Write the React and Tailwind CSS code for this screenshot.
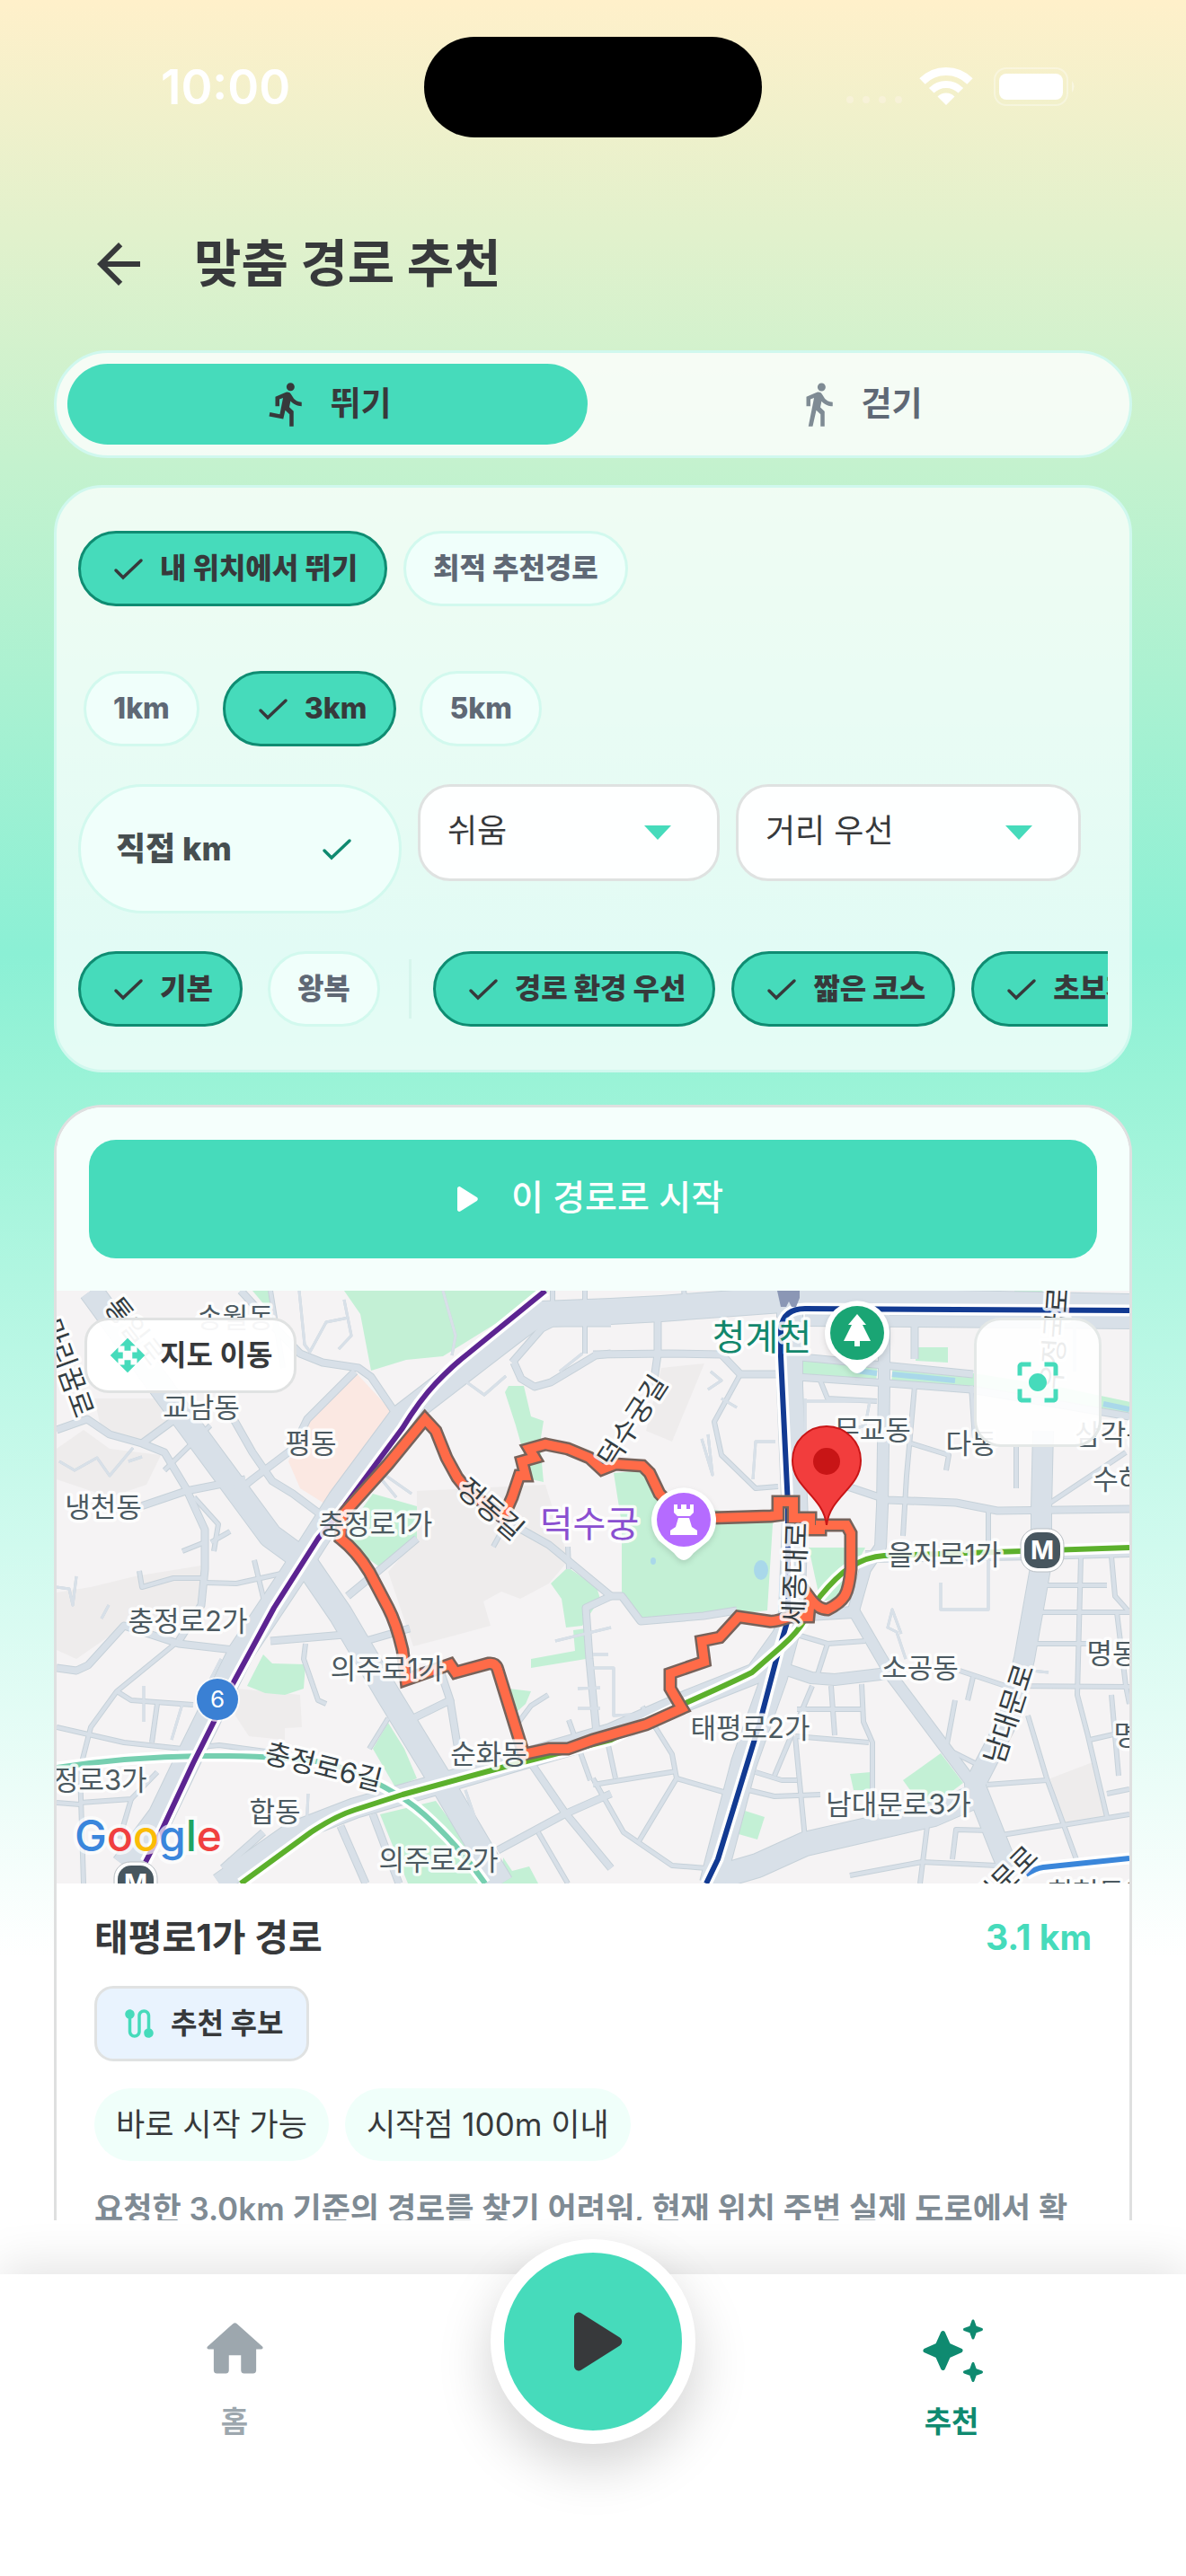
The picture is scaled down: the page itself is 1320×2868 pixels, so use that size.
import React, { useState } from 'react';
import { MdArrowBack, MdCenterFocusStrong, MdDirectionsRun, MdDirectionsWalk, MdOpenWith, MdRoute } from 'react-icons/md';

const parks = ['320,0 338,26 350,89 389,77 430,73 548,0', '218,0 240,0 243,30', '503,106 520,106 528,140 542,145 538,170 542,213 528,210 511,150 499,113', '352,226 401,240 401,276 360,308 316,276', '569,308 601,330 605,343 585,373 567,375 562,343 550,326', '575,378 589,376 589,410 528,420 528,410 577,401', '503,443 528,446 522,460 511,470', '230,405 240,415 277,416 275,443 254,450 232,448 212,440', '369,481 387,510 401,543 377,553 352,510', '360,583 422,568 462,623 483,660 391,660', '497,631 507,646 526,641 536,660 495,660', '620,203 652,200 673,233 799,256 797,260 791,356 757,360 654,368 629,336 629,260', '837,286 900,286 871,343 850,346', '957,63 992,63 992,80 956,78', '778,0 801,0 801,6 778,6', '1066,0 1098,0 1086,10 1068,10', '984,515 1009,548 976,573 955,563 942,545', '883,538 906,536 906,556 887,556', '763,578 788,586 780,611 759,605', '597,330 604,342 597,346'];
const blocks = ['0,176 30,155 59,176 116,183 100,216 59,230 0,210', '42,120 120,120 136,140 99,166 50,156', '401,223 544,216 570,300 548,326 516,343 495,335 475,346 483,373 397,396 369,313 401,276', '0,336 38,330 87,318 161,306 156,353 71,376 22,410 0,400', '201,443 271,450 273,486 254,487 254,500 214,496 199,473', '673,86 721,81 685,168 656,156', '1106,543 1153,525 1169,586 1121,596'];
const roads = [{
  width: 28,
  lines: ['38,0 140,140 238,273 275,300 316,360 369,450 430,550 483,640 495,660', '736,653 780,640 833,616 976,583 1022,563']
}, {
  width: 30,
  lines: ['75,640 116,585 152,510 205,403 263,316 316,233 385,140 446,93 507,46 526,32 540,26 617,23 673,20 807,10 1194,18', '816,20 816,106 822,256 818,360 799,430 765,526 736,636 730,660']
}, {
  width: 24,
  lines: ['181,660 262,603 332,576 430,548 524,520 617,493 702,456 778,426 818,370', '1098,156 1096,243 1096,303 1077,410 1060,476 1022,550 1052,626 1060,645']
}, {
  width: 14,
  lines: ['887,356 930,430 1022,553', '807,420 840,431 866,433 925,426', '887,356 900,310 917,285 919,240 921,106 921,0', '900,296 1094,293 1194,290', '820,362 887,358', '833,33 1194,36']
}, {
  width: 9,
  lines: ['0,155 34,143 59,160 95,170 120,180 144,220 165,266 165,310 161,350 136,390', '95,170 136,140', '205,0 238,36 271,70 296,80 336,86 350,96 377,136 392,143', '332,90 279,143 263,176 218,210 193,230', '183,125 197,143 218,180 240,212 263,226 299,253', '85,243 144,223 210,210', '0,420 22,423 35,417 75,373 136,393 197,400', '238,390 320,383', '324,340 369,303 401,276', '507,260 548,283 617,340 589,353 593,410 601,493', '344,390 393,376', '397,476 438,456 426,420', '438,456 446,506', '524,520 565,580 617,643', '491,623 565,583 617,560', '316,596 344,660', '352,583 381,660', '230,603 185,643', '597,71 681,70 740,71 761,93 803,93', '816,73 850,76 1020,93', '824,96 925,103 1018,110 1194,140', '880,218 925,233 1001,236 1047,245 1194,243', '669,33 669,71 664,106', '617,340 629,340 650,368 720,362 757,356', '955,33 955,76', '509,80 517,98 532,107 550,102 600,72 617,70', '507,80 540,42 552,36 617,36']
}, {
  width: 6,
  lines: ['132,393 67,446 38,486 26,533 30,660', '0,486 75,503 140,510 181,506 240,514', '67,446 83,456 152,461', '112,460 106,503', '277,393 275,410 291,456 300,460', '369,476 348,510', '536,603 569,660', '26,570 83,566 112,536', '83,566 70,610', '597,543 631,603 685,640 723,643', '648,613 690,543 685,516 652,463', '690,543 749,560', '597,550 690,535', '614,506 622,543', '778,536 807,545 824,545', '770,556 799,563 850,561', '862,440 866,495', '896,438 898,480 908,503 908,590', '841,440 799,540', '824,466 898,466', '822,496 904,503', '822,496 833,610', '824,383 858,393 900,390', '858,393 845,433', '1005,423 1056,440 1194,441', '1089,393 1148,393', '1094,358 1194,358', '1102,328 1169,328', '1140,296 1136,450 1148,496 1169,586', '1174,296 1178,340 1194,358', '1180,358 1190,440 1194,460', '1081,473 1102,543 1136,636', '1035,550 1102,545', '1052,606 1194,583', '963,636 1047,640', '883,651 963,636', '969,596 961,660', '997,633 1001,600 1039,601', '761,93 732,146 740,183 778,220 803,218', '955,106 946,206 942,273', '951,170 993,183 990,200', '1018,106 1022,166', '1068,173 1068,220', '1106,236 1190,180', '1037,240 1037,290', '850,100 858,120 913,123', '698,0 700,11', '552,0 552,36', '588,0 588,70', '238,0 252,86', '0,570 26,572', '172,280 193,268', '140,290 165,280', '171,150 120,200', '153,230 180,260 175,290', '92,312 95,330 130,320 161,320', '165,325 200,326 250,315', '220,300 232,350', '1150,500 1194,490', '1169,560 1194,555', '1174,450 1182,540', '1020,430 1014,456', '1000,456 990,510 1030,530', '831,0 831,12', '921,0 921,12', '505,250 486,285', '569,285 570,310', '547,450 528,462 510,486', '594,545 570,478']
}, {
  width: 3,
  lines: ['270,0 276,60 282,68 300,35 325,30', '320,10 328,50 314,65', '430,0 444,50 440,72', '3,190 20,200 45,186 59,206 85,175', '95,185 80,190', '382,135 358,200 395,226', '345,190 378,230', '440,90 476,116 500,95', '560,90 585,70', '1133,35 1133,90', '833,120 833,170 900,150 905,123', '835,123 903,123', '728,90 740,100 725,110', '740,120 757,130', '718,165 730,205 725,160', '800,168 778,168 775,210', '597,420 620,420 620,473 660,471', '597,405 614,405', '984,325 984,355 1037,355 1037,300', '945,410 935,380 925,375 930,355 940,382', '555,390 617,375', '128,500 140,460', '97,440 97,480', '183,410 165,445', '280,560 278,600', '455,556 470,600 460,625', '0,330 14,332 18,350 22,318', '50,365 58,350', '1085,423 1104,425', '580,443 605,442', '580,465 605,465']
}];
const lines = [{
  color: '#76cfb0',
  d: 'M0 531 Q79 519 161 518 T303 526 Q372 550 409 583 T477 660'
}, {
  color: '#5c2491',
  d: 'M544 0 458 70Q440 84 422 103T385 153L316 246 291 276 242 353 197 436 152 526 116 603 99 636'
}, {
  color: '#123a92',
  d: 'M1194 22 833 20Q809 20 806 42L806 73 814 240V366L803 403 782 483 736 633 723 660'
}, {
  color: '#5cb02c',
  d: 'M205 660 283 603Q310 585 332 578L385 561 499 530 617 500 698 460Q752 436 774 425L807 396Q825 380 833 366Q842 350 850 340Q868 318 883 308Q902 296 921 295L1194 286'
}, {
  color: '#3a86da',
  d: 'M1079 650Q1090 643 1098 642L1194 632'
}];
const routePath = 'M318 250 369 193 410 143 422 156 434 186 446 208 458 223 497 253 507 230 515 206 522 206 518 190 532 186 526 176 544 171 569 176 593 186 607 199 622 193 652 195 660 203 671 226 698 254 795 251 803 250 803 235 820 235 820 253 839 253 839 266 850 266 850 261 879 261 884 270 884 310Q882 332 877 340T858 355Q848 355 839 343L837 363 816 363Q800 369 793 368L759 363 738 386 718 390 721 413 683 426 683 443 696 465 656 483 597 500 569 510 548 510 520 516 491 422Q489 414 481 415L444 425 438 416 389 433 385 400Q378 370 369 353T348 313Q334 290 316 276Z';
const places = [['송월동', 199, 30], ['교남동', 161, 130], ['평동', 283, 170], ['냉천동', 52, 241], ['충정로1가', 355, 260], ['충정로2가', 146, 368], ['의주로1가', 368, 421], ['순화동', 481, 516], ['합동', 243, 580], ['의주로2가', 425, 634], ['충정로3가', 34, 545], ['을지로1가', 988, 294], ['소공동', 961, 420], ['태평로2가', 772, 487], ['남대문로3가', 937, 572], ['명동', 1175, 404], ['명동', 1205, 495], ['무교동', 908, 155], ['다동', 1018, 170], ['삼각동', 1176, 160], ['수하동', 1196, 210], ['회현동1가', 1166, 670]];
const streets = [['통일로', 87, 45, 52], ['마리꿈로', 12, 86, 70], ['정동길', 483, 243, 41], ['덕수궁길', 641, 145, -57], ['세종대로', 822, 315, -88], ['남대문로', 1060, 471, -72], ['남대문로', 1046, 664, -45], ['충정로6길', 297, 530, 14], ['우정국로', 1111, 53, -86]];

const PlayIcon = ({
  className
}) => <svg viewBox="0 0 24 24" fill="currentColor" aria-hidden="true" className={className}>
    <path d="M8 6.82v10.36c0 .79.87 1.27 1.54.84l8.14-5.18c.62-.39.62-1.29 0-1.69L9.54 5.98C8.87 5.55 8 6.03 8 6.82z" />
  </svg>;

const CheckIcon = ({
  className
}) => <svg viewBox="0 0 36 36" fill="none" stroke="currentColor" strokeWidth="3.5" strokeLinecap="round" aria-hidden="true" className={className}>
    <path d="M3 20 11 28 31 9" />
  </svg>;

const HomeIcon = ({
  className
}) => <svg viewBox="0 0 24 24" fill="currentColor" aria-hidden="true" className={className}>
    <path d="M10 19v-5h4v5c0 .55.45 1 1 1h3c.55 0 1-.45 1-1v-7h1.7c.46 0 .68-.57.33-.87L12.67 3.6c-.38-.34-.96-.34-1.34 0l-8.36 7.53c-.34.3-.13.87.33.87H5v7c0 .55.45 1 1 1h3c.55 0 1-.45 1-1z" />
  </svg>;

const SparkleIcon = ({
  className
}) => <svg viewBox="0 0 81 81" fill="currentColor" stroke="currentColor" strokeWidth="5" strokeLinejoin="round" aria-hidden="true" className={className}>
    <path d="M30.5 22.5 36.5 36 50 42 36.5 48 30.5 61.5 24.5 48 11 42 24.5 36z" />
    <path strokeWidth="3" d="M64 9 66.5 16 73.5 18.5 66.5 21 64 28 61.5 21 54.5 18.5 61.5 16zM64 56.5 66.5 63.5 73.5 66 66.5 68.5 64 75.5 61.5 68.5 54.5 66 61.5 63.5z" />
  </svg>;

const StatusBar = () => <div className="grid shrink-0 grid-cols-[1fr_376px_1fr] items-center pt-[41px]">
    <div className="pl-[179px] text-[53px] leading-[64px] font-semibold text-white">10:00</div>
    <div className="h-28 rounded-full bg-black" />
    <div className="flex justify-end pr-[123px]">
      <svg viewBox="0 0 256 60" fill="none" stroke="#fff" className="h-[60px] w-64" aria-hidden="true">
        {[5, 23, 41, 59].map(x => <circle key={x} cx={x} cy="44" r="4" fill="#fff4ea" fillOpacity=".4" stroke="none" />)}
        <path d="M85.5 23.5A37.5 37.5 0 0 1 138.5 23.5" strokeWidth="9" />
        <path d="M95.7 33.7A23 23 0 0 1 128.3 33.7" strokeWidth="8" />
        <path d="M112 50 102.5 40.5A13.5 13.5 0 0 1 121.5 40.5z" fill="#fff" stroke="none" />
        <rect x="166" y="9" width="81" height="41" rx="13" strokeOpacity=".35" strokeWidth="2" />
        <rect x="171" y="15" width="71" height="29" rx="8" fill="#fff" stroke="none" />
        <path d="M252 23Q257 29 252 36z" fill="#fff" fillOpacity=".4" stroke="none" />
      </svg>
    </div>
  </div>;

const Chip = ({
  label,
  selected,
  onClick
}) => <button type="button" aria-pressed={selected} onClick={onClick} className={`flex h-[84px] shrink-0 items-center rounded-full border-3 text-[32px] leading-10 font-extrabold whitespace-nowrap ${selected ? 'gap-4 border-[#0f8c72] bg-[#46dbbb] pr-[30px] pl-9 text-[#37393b]' : 'border-[#d2f9ee] bg-[#f0fffb] px-[30px] text-[#5f6875]'}`}>
    {selected && <CheckIcon className="h-9 w-9" />}
    {label}
  </button>;

const SelectBox = ({
  label,
  options,
  className
}) => <div className={`relative h-[108px] ${className}`}>
    <select aria-label={label} className="h-full w-full appearance-none rounded-[36px] border-3 border-[#dfe2e1] bg-white/95 pr-20 pb-1 pl-[30px] text-4xl text-[#37393b]">
      {options.map(option => <option key={option}>{option}</option>)}
    </select>
    <svg viewBox="0 0 30 16" className="pointer-events-none absolute top-[46px] right-[54px] h-4 w-[30px]" aria-hidden="true">
      <path d="M0 0h30L15 16z" fill="#46dbbb" />
    </svg>
  </div>;

const RouteMap = () => <svg viewBox="0 0 1194 660" preserveAspectRatio="xMidYMid slice" role="img" aria-label="경로 지도" className="h-[660px] w-full">
    <rect width="1194" height="660" fill="#f5f3f4" />
    {blocks.map(points => <polygon key={points} points={points} fill="#eeecec" />)}
    <polygon points="332,90 369,130 381,143 316,236 303,240 271,220 265,206 258,190 283,143" fill="#fbe8e2" />
    {parks.map(points => <polygon key={points} points={points} fill="#c3f0d5" />)}
    <path d="M828 84 913 91M930 92 1020 100 1110 114 1194 132" stroke="#c3f0d5" strokeWidth="16" fill="none" />
    <path d="M890 89 913 92M930 93 1000 100M1165 126 1194 132" stroke="#a9d8ea" strokeWidth="6" fill="none" />
    <ellipse cx="784" cy="311" rx="8" ry="11" fill="#a9d8ea" />
    <ellipse cx="664" cy="301" rx="3" ry="4" fill="#a9d8ea" />
    <g fill="none" strokeLinejoin="round">
      {roads.map(group => <g key={group.width} stroke="#c6d1d9" strokeWidth={group.width}>
          {group.lines.map(points => <polyline key={points} points={points} />)}
        </g>)}
      {roads.map(group => <g key={group.width} stroke="#d8e0e8" strokeWidth={group.width > 3 ? group.width - 2 : 3}>
          {group.lines.map(points => <polyline key={points} points={points} />)}
        </g>)}
      {lines.map(line => <g key={line.color}>
          <path d={line.d} stroke="#fff" strokeWidth="13" />
          <path d={line.d} stroke={line.color} strokeWidth="6" />
        </g>)}
      <path d={routePath} stroke="#77625a" strokeWidth="15" strokeLinejoin="miter" />
      <path d={routePath} stroke="#ff6b48" strokeWidth="10" strokeLinejoin="miter" />
    </g>
    <path d="M802 0h25v8l-4 10h-5l-3-6-3 6h-6z" fill="#8b97b5" />
    <circle cx="179" cy="455" r="25" fill="#fff" fillOpacity=".7" />
    <circle cx="179" cy="455" r="23" fill="#3a80d4" />
    <text x="179" y="464" textAnchor="middle" fontSize="26" fill="#fff">6</text>
    <g textAnchor="middle" paintOrder="stroke" stroke="#fff" strokeOpacity=".85" strokeWidth="7" strokeLinejoin="round">
      {places.map(([name, x, y]) => <text key={`${name}${x}`} x={x} y={y + 11} fontSize="31" fill="#4b5960">{name}</text>)}
      {streets.map(([name, x, y, angle]) => <text key={`${name}${x}`} transform={`translate(${x} ${y}) rotate(${angle})`} y="11" fontSize="31" fill="#343d42">{name}</text>)}
      <text x="785" y="66" fontSize="40" fill="#12876c">청계천</text>
      <text x="593" y="274" fontSize="40" fill="#8a4fd0">덕수궁</text>
    </g>
    {[[1097, 289], [88, 660]].map(([x, y]) => <g key={x}>
        <rect x={x - 24} y={y - 24} width="48" height="48" rx="18" fill="#fff" stroke="#b9bfc4" strokeWidth="1" />
        <rect x={x - 20} y={y - 20} width="40" height="40" rx="15" fill="#47565f" />
        <text x={x} y={y + 10} textAnchor="middle" fontSize="28" fontWeight="700" fill="#fff">M</text>
      </g>)}
    <g className="drop-shadow-md">
      <path d="M891 92Q886 92 880 84L863 70A36 36 0 1 1 919 70L902 84Q896 92 891 92z" fill="#fff" />
      <circle cx="891" cy="47" r="30" fill="#1aa574" />
      <path d="M891 26 901 38H897L906 56H894V62H888V56H876L885 38H881z" fill="#fff" />
    </g>
    <g className="drop-shadow-md">
      <path d="M698 300Q693 300 687 292L670 278A36 36 0 1 1 726 278L709 292Q703 300 698 300z" fill="#fff" />
      <circle cx="698" cy="255" r="30" fill="#b56bff" />
      <path d="M687 238h4v5h4v-5h6v5h4v-5h4v9l-4 4h-14l-4-4zM692 253h12l3 10 6 4v5h-30v-5l6-4z" fill="#fff" />
    </g>
    <path d="M857 261C853 228 819 220 819 189A38 38 0 0 1 895 189C895 220 861 228 857 261z" fill="#f23d3d" stroke="#c81516" strokeWidth="2" />
    <circle cx="857" cy="190" r="15" fill="#c81516" />
    <text x="20" y="624" fontSize="48" fontWeight="500" paintOrder="stroke" stroke="#fff" strokeOpacity=".7" strokeWidth="8">
      <tspan fill="#3a86dc">G</tspan>
      <tspan fill="#f04040">o</tspan>
      <tspan fill="#fbbc05">o</tspan>
      <tspan fill="#3a86dc">g</tspan>
      <tspan fill="#1fa463">l</tspan>
      <tspan fill="#f04040">e</tspan>
    </text>
  </svg>;

const RouteCard = () => <article className="mx-[60px] mt-9 flex min-h-0 flex-1 flex-col overflow-hidden rounded-t-[54px] border-3 border-b-0 border-[#dfe0e0] bg-white">
    <div className="bg-[#f5fffc] p-9">
      <button type="button" className="flex h-[132px] w-full items-center justify-center gap-6 rounded-[30px] bg-[#46dbbb] pr-6 text-[39px] font-medium text-white">
        <PlayIcon className="h-[54px] w-[54px]" />
        <span className="pb-1">이 경로로 시작</span>
      </button>
    </div>
    <div className="relative shrink-0">
      <RouteMap />
      <button type="button" className="absolute top-[30px] left-[31px] flex h-[84px] items-center gap-[15px] rounded-[27px] border-3 border-[#e0e2e2] bg-white/95 px-6 text-[32px] font-bold text-[#37393b]">
        <MdOpenWith className="h-[42px] w-[42px] text-[#46dbbb]" />
        지도 이동
      </button>
      <button type="button" aria-label="현재 위치" className="absolute top-[30px] right-[31px] flex h-36 w-[142px] items-center justify-center rounded-[30px] border-3 border-[#e4e8e7] bg-white/90">
        <MdCenterFocusStrong className="h-[60px] w-[60px] text-[#46dbbb]" />
      </button>
    </div>
    <div className="px-[42px] pt-9">
      <div className="flex items-center justify-between leading-[48px] font-bold">
        <h2 className="text-[41px] text-[#37393b]">태평로1가 경로</h2>
        <span className="text-[39px] text-[#46dbbb]">3.1 km</span>
      </div>
      <div className="mt-[30px] flex h-[84px] w-fit items-center gap-[14px] rounded-[21px] border-3 border-[#e0e2e2] bg-[#e9f3fe] px-[26px] text-[32px] font-bold text-[#37393b]">
        <MdRoute className="h-[42px] w-[42px] text-[#46dbbb]" />
        추천 후보
      </div>
      <ul className="mt-[30px] flex gap-[18px] text-[35px] leading-[81px] text-[#37393b]">
        <li className="rounded-full bg-[#f0fffa] px-6">바로 시작 가능</li>
        <li className="rounded-full bg-[#f0fffa] px-6">시작점 100m 이내</li>
      </ul>
      <p className="mt-7 text-[35px] leading-[51px] font-semibold text-[#7f8b94]">요청한 3.0km 기준의 경로를 찾기 어려워, 현재 위치 주변 실제 도로에서 확인된 경로를 추천해요.</p>
    </div>
  </article>;

const BottomNav = () => <nav className="flex h-[336px] shrink-0 items-start bg-white shadow-[0_-12px_48px_rgba(0,0,0,0.10)]">
    <a href="#home" className="flex flex-1 flex-col items-center gap-5 pt-[43px] text-[33px] leading-10 font-bold text-[#9da7ae]">
      <HomeIcon className="h-[81px] w-[81px]" />
      홈
    </a>
    <button type="button" aria-label="시작" className="mx-6 -mt-[39px] flex h-[228px] w-[228px] shrink-0 items-center justify-center rounded-full border-15 border-white bg-[#46dbbb] text-[#37393b] shadow-[0_24px_60px_rgba(0,0,0,0.18)]">
      <PlayIcon className="h-[126px] w-[126px]" />
    </button>
    <a href="#recommend" aria-current="page" className="flex flex-1 flex-col items-center gap-5 pt-[43px] text-[33px] leading-10 font-bold text-[#0f8a70]">
      <SparkleIcon className="h-[81px] w-[81px]" />
      추천
    </a>
  </nav>;

const App = () => {
  const [mode, setMode] = useState('run');
  const [start, setStart] = useState('내 위치에서 뛰기');
  const [distance, setDistance] = useState('3km');
  const [shape, setShape] = useState('기본');
  const modes = [{
    id: 'run',
    label: '뛰기',
    icon: MdDirectionsRun
  }, {
    id: 'walk',
    label: '걷기',
    icon: MdDirectionsWalk
  }];
  return <div className="flex h-screen flex-col overflow-hidden bg-[linear-gradient(180deg,#fff0ca_0%,#c4f2ce_18%,#8bf0d5_37%,#9af3d7_42%,#d0faee_60%,#fff_76%)] font-[Inter,'Noto_Sans_CJK_KR',sans-serif]">
      <div className="flex min-h-0 flex-1 flex-col overflow-hidden">
        <StatusBar />
        <header className="flex h-[237px] shrink-0 items-center gap-12 pt-11 pl-24">
          <button type="button" aria-label="뒤로" className="text-[#37393b]">
            <MdArrowBack className="h-[72px] w-[72px]" />
          </button>
          <h1 className="text-[57px] leading-[72px] font-bold text-[#37393b]">맞춤 경로 추천</h1>
        </header>
        <div className="mx-[60px] flex h-[120px] shrink-0 gap-3 rounded-full border-3 border-[#d0f8ee] bg-white/80 p-3">
          {modes.map(item => <button key={item.id} type="button" aria-pressed={mode === item.id} onClick={() => setMode(item.id)} className={`flex flex-1 items-center justify-center gap-5 rounded-full text-[37px] font-bold ${mode === item.id ? 'bg-[#46dbbb] text-[#37393b]' : 'text-[#5f6875]'}`}>
              <item.icon className={mode === item.id ? 'h-[54px] w-[54px]' : 'h-[54px] w-[54px] text-[#7f8b94]'} />
              {item.label}
            </button>)}
        </div>
        <section className="mx-[60px] mt-[30px] shrink-0 rounded-[54px] border-3 border-[#d0f8ee] bg-white/75 px-6 py-12">
          <div className="flex gap-[18px]">
            {['내 위치에서 뛰기', '최적 추천경로'].map(label => <Chip key={label} label={label} selected={start === label} onClick={() => setStart(label)} />)}
          </div>
          <div className="mt-[72px] flex gap-[26px] pl-[6px]">
            {['1km', '3km', '5km'].map(label => <Chip key={label} label={label} selected={distance === label} onClick={() => setDistance(label)} />)}
          </div>
          <div className="mt-[42px] flex items-start gap-[18px]">
            <label className="flex h-36 w-[360px] items-center justify-between rounded-full border-3 border-[#d2f9ee] bg-[#f0fffb] pr-[50px] pl-[39px] text-[#0f8a70]">
              <input type="text" placeholder="직접 km" aria-label="직접 km" className="w-[200px] text-4xl font-extrabold outline-none placeholder:text-[#464e50]" />
              <CheckIcon className="h-9 w-9" />
            </label>
            <SelectBox label="난이도" options={['쉬움', '보통', '어려움']} className="w-[336px]" />
            <SelectBox label="우선순위" options={['거리 우선', '시간 우선']} className="w-[384px]" />
          </div>
          <div className="mt-[42px] flex items-center overflow-hidden">
            <div className="flex gap-7">
              {['기본', '왕복'].map(label => <Chip key={label} label={label} selected={shape === label} onClick={() => setShape(label)} />)}
            </div>
            <div className="mr-6 ml-8 h-[66px] w-[3px] shrink-0 bg-[#d6f5ec]" />
            <div className="flex gap-[18px]">
              {['경로 환경 우선', '짧은 코스', '초보자 추천'].map(label => <Chip key={label} label={label} selected />)}
            </div>
          </div>
        </section>
        <RouteCard />
      </div>
      <div className="h-[60px] shrink-0 bg-white" />
      <BottomNav />
    </div>;
};
export default App;
